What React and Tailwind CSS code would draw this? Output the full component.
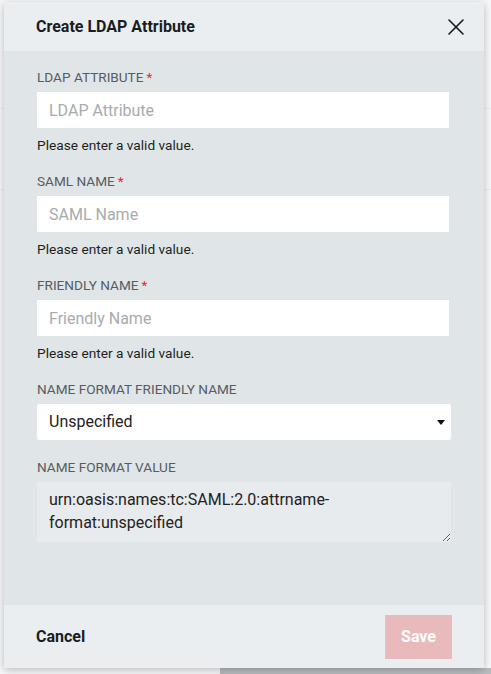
import { X } from 'lucide-react';

const FIELDS = [
  { label: 'LDAP Attribute', placeholder: 'LDAP Attribute' },
  { label: 'SAML Name', placeholder: 'SAML Name' },
  { label: 'Friendly Name', placeholder: 'Friendly Name' },
];

function Label({ children, required }) {
  return (
    <div className="text-[13.6px] leading-4 uppercase text-[#575c61] mb-[7px]">
      {children}
      {required && <span className="text-[#f0261f] ml-[3px]">*</span>}
    </div>
  );
}

function TextField({ label, placeholder }) {
  return (
    <div className="mb-[20px]">
      <Label required>{label}</Label>
      <input
        type="text"
        placeholder={placeholder}
        className="block w-[412px] h-9 bg-white px-[12px] text-base text-[#222] placeholder:text-[#a8abae] outline-none"
      />
      <div className="text-[13.7px] leading-4 text-[#1c1f22] mt-[9px]">Please enter a valid value.</div>
    </div>
  );
}

export default function App() {
  return (
    <div
      className="relative w-[491px] h-[674px] overflow-hidden bg-[#f7f8f9]"
      style={{ fontFamily: 'Roboto, "Liberation Sans", sans-serif' }}
    >
      {/* page behind the dialog */}
      <div className="flex flex-col pt-[108px]">
        <div className="h-px bg-[#eceef0]" />
        <div className="h-[80px]" />
        <div className="h-px bg-[#eceef0]" />
        <div className="h-[400px]" />
      </div>
      <div className="absolute left-[220px] right-0 bottom-0 h-[6px] bg-[#b9bcbf]" />

      {/* dialog */}
      <div className="absolute left-[4px] top-[2px] w-[480px] h-[666px] flex flex-col bg-[#e0e5e8] shadow-[0_2px_8px_rgba(0,0,0,0.25)]">
        <div className="h-[49px] shrink-0 bg-[#ebeef1] flex items-center justify-between pl-[32px] pr-[14px]">
          <h2 className="text-base font-bold text-[#1a1c1e]">Create LDAP Attribute</h2>
          <X size={28} strokeWidth={1.4} className="text-[#1a1c1e]" />
        </div>

        <div className="flex-1 px-[33px] pt-[18px]">
          {FIELDS.map((f) => (
            <TextField key={f.label} label={f.label} placeholder={f.placeholder} />
          ))}

          <div className="mb-[19px]">
            <Label>Name Format Friendly Name</Label>
            <div className="w-full h-9 bg-white rounded-[2px] flex items-center justify-between pl-[12px] pr-[6px]">
              <span className="text-base text-[#222]">Unspecified</span>
              <svg width="8" height="5" viewBox="0 0 8 5">
                <path d="M0 0h8L4 5z" fill="#111" />
              </svg>
            </div>
          </div>

          <div>
            <Label>Name Format Value</Label>
            <textarea
              readOnly
              value="urn:oasis:names:tc:SAML:2.0:attrname-format:unspecified"
              className="block w-full h-[60px] bg-[#e8ebee] px-[12px] pt-[6px] text-base leading-[23px] text-[#222] outline-none resize-y"
            />
          </div>
        </div>

        <div className="h-[63px] shrink-0 bg-[#ebeef1] flex items-center justify-between pl-[32px] pr-[32px]">
          <button className="text-base font-bold text-[#1a1c1e]">Cancel</button>
          <button className="w-[67px] h-[44px] bg-[#e9babc] text-white text-base font-bold">Save</button>
        </div>
      </div>
    </div>
  );
}
